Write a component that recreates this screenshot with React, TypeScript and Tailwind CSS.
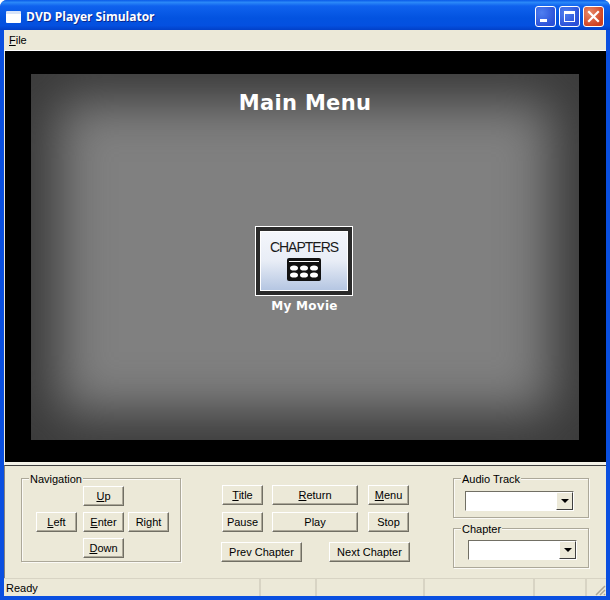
import type { ReactNode } from "react";

// one classic raised windows button
function Btn({ className, children }: { className: string; children: ReactNode }) {
  return (
    <button className={`flex items-center justify-center bg-[#ece9d8] border border-t-white border-l-white border-r-[#716f64] border-b-[#716f64] shadow-[inset_-1px_-1px_0_#aca899] text-[11px] leading-none text-black font-['Liberation_Sans',sans-serif] ${className}`}>
      {children}
    </button>
  );
}

function Group({ label, className, children }: { label: string; className: string; children: ReactNode }) {
  return (
    <div className={`relative border border-[#aca899] shadow-[inset_1px_1px_0_#fbfaf6,1px_1px_0_#fbfaf6] ${className}`}>
      <span className="absolute left-[7px] top-[-7px] bg-[#ece9d8] px-[1px] text-[11px] leading-[14px] text-black font-['Liberation_Sans',sans-serif]">{label}</span>
      {children}
    </div>
  );
}

function Combo() {
  return (
    <div className="flex h-[20px] w-[109px] items-stretch border border-t-[#716f64] border-l-[#716f64] border-r-white border-b-white bg-white">
      <div className="flex-1" />
      <div className="flex w-[17px] items-center justify-center bg-[#ece9d8] border border-t-white border-l-white border-r-[#404040] border-b-[#404040]">
        <div className="h-0 w-0 border-x-[4px] border-t-[4px] border-x-transparent border-t-black" />
      </div>
    </div>
  );
}

export default function App() {
  return (
    <div className="flex h-[600px] w-[610px] flex-col overflow-hidden rounded-t-[7px] bg-[#0a4fe0] font-['Liberation_Sans',sans-serif] text-black">
      {/* title bar */}
      <div className="flex h-[30px] shrink-0 items-center bg-[linear-gradient(180deg,#0a5ae8_0%,#2a88f8_8%,#0f62ee_20%,#0353e0_60%,#0450e0_85%,#0240c8_100%)] pl-[6px] pr-[6px] pt-[3px]">
        <div className="h-[12px] w-[15px] rounded-[1px] bg-white border-t-[3px] border-[#d8e4f8]" />
        <span className="ml-[5px] text-[12px] font-bold text-white font-['Open_Sans',sans-serif] [text-shadow:1px_1px_0_#0a2a90]">DVD Player Simulator</span>
        <div className="ml-auto flex gap-[3px]">
          <div className="flex h-[21px] w-[21px] items-end rounded-[3px] border border-white bg-[radial-gradient(circle_at_30%_30%,#4f7ff0,#2a50d8_75%)] pb-[4px] pl-[4px]">
            <div className="h-[3px] w-[7px] bg-white" />
          </div>
          <div className="flex h-[21px] w-[21px] items-center justify-center rounded-[3px] border border-white bg-[radial-gradient(circle_at_30%_30%,#4f7ff0,#2a50d8_75%)]">
            <div className="h-[11px] w-[11px] border border-t-[3px] border-white" />
          </div>
          <div className="flex h-[21px] w-[21px] items-center justify-center rounded-[3px] border border-white bg-[radial-gradient(circle_at_30%_30%,#e88a6a,#cf4020_75%)]">
            <svg width="13" height="13" viewBox="0 0 13 13">
              <path d="M2 2 L11 11 M11 2 L2 11" stroke="white" strokeWidth="2.2" strokeLinecap="square" />
            </svg>
          </div>
        </div>
      </div>

      {/* client area */}
      <div className="mx-[4px] flex min-h-0 flex-1 flex-col bg-[#ece9d8]">
        <div className="flex h-[20px] shrink-0 items-center pl-[5px] text-[11px]">
          <span><u>F</u>ile</span>
        </div>
        <div className="h-px shrink-0 bg-white" />

        {/* video */}
        <div className="ml-px flex h-[411px] shrink-0 items-center justify-center bg-black">
          <div className="mr-[2px] flex h-[366px] w-[548px] flex-col items-center bg-[#808080] pt-[16px] shadow-[inset_0_0_50px_28px_#3a3a3a]">
            <div className="ml-px text-[21px] font-bold leading-[26px] tracking-[0.3px] text-white font-['DejaVu_Sans',sans-serif]">Main Menu</div>
            <div className="mr-[2px] mt-[110px] flex h-[70px] w-[98px] flex-col border border-white bg-[#2a2a2a] p-[4px]">
              <div className="flex flex-1 flex-col items-center border border-white bg-[linear-gradient(180deg,#f4f6fb_0%,#e8edf6_50%,#b5c6e2_100%)] pt-[7px]">
                <span className="ml-px text-[14px] leading-[16px] tracking-[-1px] text-[#1a1a1a] font-['Liberation_Sans',sans-serif]">CHAPTERS</span>
                <svg className="ml-px mt-[3px]" width="34" height="23" viewBox="0 0 34 23">
                  <rect width="34" height="23" rx="2" fill="#111" />
                  <rect x="2" y="3" width="30" height="1" fill="#fff" />
                  {[0, 1].map((r) =>
                    [0, 1, 2].map((c) => (
                      <ellipse key={`${r}-${c}`} cx={7 + c * 10} cy={10 + r * 7} rx="4" ry="2.6" fill="#fff" />
                    ))
                  )}
                </svg>
              </div>
            </div>
            <div className="mt-[1px] text-[12px] font-bold leading-[18px] tracking-[0.3px] text-white font-['DejaVu_Sans',sans-serif]">My Movie</div>
          </div>
        </div>

        {/* controls */}
        <div className="h-[3px] shrink-0 bg-[#f4f2e8]" />
        <div className="flex h-[113px] shrink-0 border-t border-l border-t-[#404040] border-l-[#808080]">
          <Group label="Navigation" className="ml-[16px] mt-[12px] flex h-[84px] w-[160px] flex-col items-start gap-[6px] pl-[14px] pt-[7px]">
            <div className="flex pl-[47px]"><Btn className="h-[20px] w-[41px]"><span><u>U</u>p</span></Btn></div>
            <div className="flex gap-[6px]">
              <Btn className="h-[20px] w-[41px]"><span><u>L</u>eft</span></Btn>
              <Btn className="h-[20px] w-[41px]"><span><u>E</u>nter</span></Btn>
              <Btn className="ml-[-2px] h-[20px] w-[41px]"><span>Ri<u>g</u>ht</span></Btn>
            </div>
            <div className="flex pl-[47px]"><Btn className="h-[20px] w-[41px]"><span><u>D</u>own</span></Btn></div>
          </Group>

          <div className="ml-[40px] mt-[19px] flex w-[189px] flex-col">
            <div className="flex pl-[1px]">
              <Btn className="h-[20px] w-[41px]"><span><u>T</u>itle</span></Btn>
              <Btn className="ml-[9px] h-[20px] w-[86px]"><span><u>R</u>eturn</span></Btn>
              <Btn className="ml-[10px] h-[20px] w-[41px]"><span><u>M</u>enu</span></Btn>
            </div>
            <div className="mt-[7px] flex pl-[1px]">
              <Btn className="h-[20px] w-[41px]">Pause</Btn>
              <Btn className="ml-[9px] h-[20px] w-[86px]">Play</Btn>
              <Btn className="ml-[10px] h-[20px] w-[41px]">Stop</Btn>
            </div>
            <div className="mt-[10px] flex justify-between">
              <Btn className="h-[20px] w-[81px]">Prev Chapter</Btn>
              <Btn className="h-[20px] w-[81px]">Next Chapter</Btn>
            </div>
          </div>

          <div className="ml-[43px] mt-[12px] flex flex-col gap-[10px]">
            <Group label="Audio Track" className="h-[40px] w-[136px] pl-[11px] pt-[12px]">
              <Combo />
            </Group>
            <Group label="Chapter" className="h-[40px] w-[136px] pl-[14px] pt-[11px]">
              <Combo />
            </Group>
          </div>
        </div>

        {/* status bar */}
        <div className="flex h-[18px] shrink-0 items-stretch border-t border-[#d8d4c4] text-[11px] leading-[18px]">
          <div className="w-[257px] border-r-2 border-[#d8d4c4] pl-[2px]">Ready</div>
          <div className="w-[56px] border-r-2 border-[#d8d4c4]" />
          <div className="w-[108px] border-r-2 border-[#d8d4c4]" />
          <div className="w-[110px] border-r-2 border-[#d8d4c4]" />
          <div className="w-[52px] border-r-2 border-[#d8d4c4]" />
          <div className="flex flex-1 items-end justify-end">
            <svg width="12" height="12" viewBox="0 0 12 12">
              <path d="M11 2 L2 11 M11 6 L6 11 M11 10 L10 11" stroke="#aca899" strokeWidth="1.5" />
            </svg>
          </div>
        </div>
      </div>
      <div className="h-[4px] shrink-0" />
    </div>
  );
}
